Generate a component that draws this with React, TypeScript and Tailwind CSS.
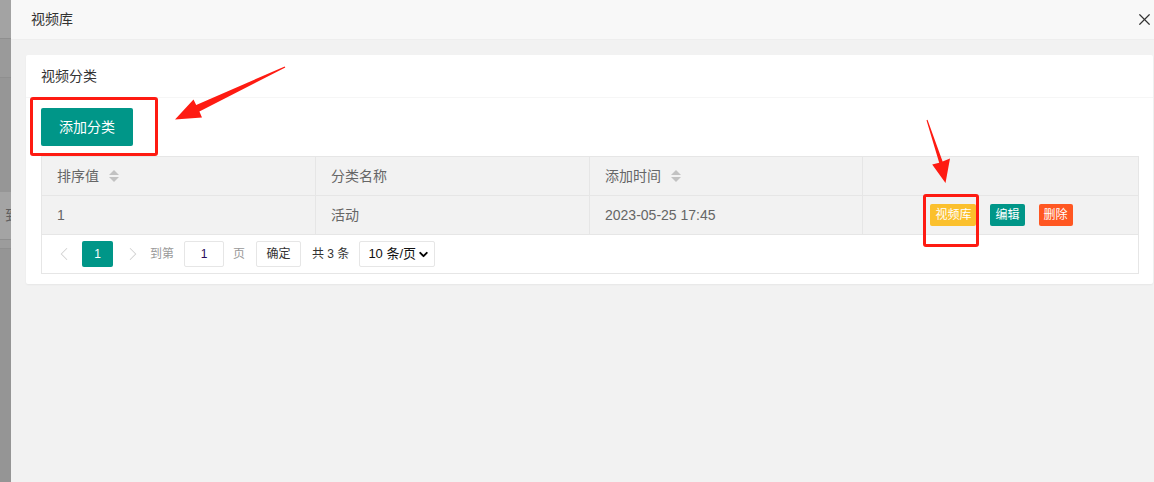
import { X, ChevronLeft, ChevronRight, ChevronDown } from "lucide-react";

const font = { fontFamily: '"Liberation Sans", "Noto Sans CJK SC", sans-serif' };

function SortIcon() {
  return (
    <span className="ml-[10px] inline-flex flex-col gap-[2px]">
      <span className="h-0 w-0 border-x-[5px] border-b-[5px] border-x-transparent border-b-[#c2c2c2]" />
      <span className="h-0 w-0 border-x-[5px] border-t-[5px] border-x-transparent border-t-[#c2c2c2]" />
    </span>
  );
}

// dimmed page that shows on the left of the modal
function BackStrip() {
  return (
    <div className="flex w-[11px] shrink-0 flex-col overflow-hidden">
      <div className="h-[39px] border-b border-[#8f8f8f] bg-[#a3a3a3]" />
      <div className="h-[39px] border-b border-[#8f8f8f] bg-[#9a9a9a]" />
      <div className="h-[114px] bg-[#969696]" />
      <div className="flex h-[47px] items-center bg-[#a4a4a4] pl-[5px] text-[14px] text-[#5f5f5f]">
        到
      </div>
      <div className="h-[10px] border-y border-[#8f8f8f] bg-[#9c9c9c]" />
      <div className="flex-1 bg-[#959595]" />
    </div>
  );
}

function Annotations() {
  return (
    <div className="pointer-events-none absolute inset-0">
      <div className="absolute left-[30px] top-[97px] h-[59px] w-[128px] rounded-[3px] border-[3px] border-[#fe1b12]" />
      <div className="absolute left-[923px] top-[194px] h-[53px] w-[56px] rounded-[3px] border-[3px] border-[#fe1b12]" />
      <svg className="absolute left-0 top-0" width="1154" height="482">
        <polygon
          fill="#fe1b12"
          points="285.3,67.6 199.4,111.4 202,117.5 175,119.5 193.5,99.5 196.2,105 284.7,66.4"
        />
        <polygon
          fill="#fe1b12"
          points="927.5,119.8 942.6,161.6 950,158.6 945.5,183 932.2,164.4 939.2,162.8 926.5,120.2"
        />
      </svg>
    </div>
  );
}

export default function App() {
  return (
    <div className="relative flex h-[482px] w-[1154px] overflow-hidden" style={font}>
      <BackStrip />

      <div className="flex flex-1 flex-col bg-white">
        <div className="flex h-[40px] shrink-0 items-center justify-between border-b border-[#eeeeee] bg-[#f8f8f8] pl-[20px] pr-[0px]">
          <span className="text-[14px] text-[#333]">视频库</span>
          <X size={19} strokeWidth={1.5} className="text-[#333]" />
        </div>

        <div className="flex-1 bg-[#f2f2f2] pl-[15px] pt-[15px]">
          <div className="w-[1127px] rounded-[2px] bg-white shadow-[0_1px_2px_0_rgba(0,0,0,0.05)]">
            <div className="h-[43px] border-b border-[#f6f6f6] px-[15px] text-[14px] leading-[42px] text-[#333]">
              视频分类
            </div>

            <div className="px-[15px] pb-[10px] pt-[10px]">
              <button className="h-[38px] rounded-[2px] bg-[#009688] px-[18px] text-[14px] text-white">
                添加分类
              </button>

              <div className="mt-[10px] w-[1098px] border border-[#e6e6e6] text-[14px] text-[#666]">
                <div className="grid grid-cols-[274px_274px_273px_1fr] bg-[#f2f2f2]">
                  <div className="flex h-[38px] items-center border-r border-[#e6e6e6] px-[15px]">
                    排序值
                    <SortIcon />
                  </div>
                  <div className="flex h-[38px] items-center border-r border-[#e6e6e6] px-[15px]">
                    分类名称
                  </div>
                  <div className="flex h-[38px] items-center border-r border-[#e6e6e6] px-[15px]">
                    添加时间
                    <SortIcon />
                  </div>
                  <div className="h-[38px]" />
                </div>

                <div className="grid grid-cols-[274px_274px_273px_1fr] border-t border-[#e6e6e6] bg-[#f2f2f2]">
                  <div className="flex h-[38px] items-center border-r border-[#e6e6e6] px-[15px]">1</div>
                  <div className="flex h-[38px] items-center border-r border-[#e6e6e6] px-[15px]">活动</div>
                  <div className="flex h-[38px] items-center border-r border-[#e6e6e6] px-[15px]">
                    2023-05-25 17:45
                  </div>
                  <div className="flex h-[38px] items-center justify-center gap-[14px] pl-[2px] text-[12px] text-white">
                    <span className="flex h-[22px] items-center rounded-[2px] bg-[#fbc02d] px-[5px]">视频库</span>
                    <span className="flex h-[22px] items-center rounded-[2px] bg-[#009688] px-[5px]">编辑</span>
                    <span className="flex h-[22px] items-center rounded-[2px] bg-[#ff5722] px-[5px]">删除</span>
                  </div>
                </div>

                <div className="flex h-[39px] items-center border-t border-[#e6e6e6] bg-white pl-[11px] text-[12px]">
                  <ChevronLeft size={22} strokeWidth={1.1} className="text-[#d2d2d2]" />
                  <span className="ml-[7px] flex h-[26px] w-[31px] items-center justify-center rounded-[2px] bg-[#009688] text-white">
                    1
                  </span>
                  <ChevronRight size={22} strokeWidth={1.1} className="ml-[9px] text-[#d2d2d2]" />
                  <span className="ml-[6px] text-[#999]">到第</span>
                  <span className="ml-[10px] flex h-[26px] w-[40px] items-center justify-center rounded-[2px] border border-[#e6e6e6] text-[#2a0a5c]">
                    1
                  </span>
                  <span className="ml-[9px] text-[#999]">页</span>
                  <span className="ml-[11px] flex h-[26px] w-[45px] items-center justify-center rounded-[2px] border border-[#e6e6e6] text-[#333]">
                    确定
                  </span>
                  <span className="ml-[11px] text-[#333]">共 3 条</span>
                  <span className="ml-[10px] flex h-[26px] w-[76px] items-center justify-between rounded-[2px] border border-[#e6e6e6] pl-[8px] pr-[4px] text-[13px] text-[#111]">
                    10 条/页
                    <ChevronDown size={13} strokeWidth={3.5} className="text-black" />
                  </span>
                </div>
              </div>
            </div>
          </div>
        </div>
      </div>

      <Annotations />
    </div>
  );
}
